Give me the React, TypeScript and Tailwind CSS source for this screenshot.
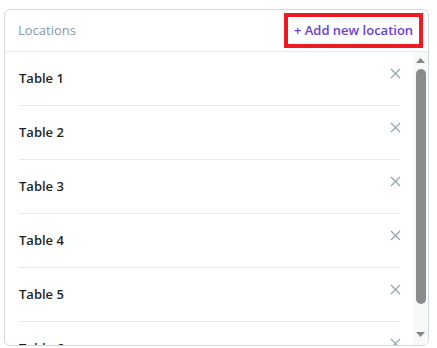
const tables = ['Table 1', 'Table 2', 'Table 3', 'Table 4', 'Table 5', 'Table 6', 'Table 7', 'Table 8'];

const Cross = () => (
  <svg width="11" height="11" viewBox="0 0 11 11" className="-mt-[10px] -mr-[1px]">
    <path d="M1 1L10 10M10 1L1 10" stroke="#93a3b0" strokeWidth="1.2" fill="none" />
  </svg>
);

const Arrow = ({ down }: { down?: boolean }) => (
  <svg width="9" height="5" viewBox="0 0 9 5">
    <path d={down ? 'M0 0H9L4.5 5Z' : 'M0 5H9L4.5 0Z'} fill="#858585" />
  </svg>
);

export default function App() {
  return (
    <div className="w-[437px] h-[348px] bg-white pt-[9px] pl-[4px] font-['Open_Sans',sans-serif]">
      <div className="w-[425px] h-[337px] border border-[#d3d9de] rounded-[6px] flex flex-col overflow-hidden">
        <div className="h-[42px] flex items-center justify-between pl-[13px] pr-[5px] border-b border-[#e6e9ec] shrink-0">
          <span className="text-[13px] text-[#8797a6]">Locations</span>
          <button className="h-[35px] w-[139px] border-[4px] border-[#ec1c24] text-[13px] font-semibold text-[#6b3fd6] flex items-center justify-center">
            + Add new location
          </button>
        </div>
        <div className="flex-1 flex min-h-0">
          <div className="flex-1 overflow-hidden">
            {tables.map((t) => (
              <div key={t} className="ml-[14px] mr-[13px] h-[54px] border-b border-[#e6e9ec] flex items-center justify-between">
                <span className="text-[13px] font-semibold text-[#1f1f1f]">{t}</span>
                <Cross />
              </div>
            ))}
          </div>
          <div className="w-[15px] bg-[#f8f8f8] flex flex-col items-center">
            <div className="h-[15px] flex items-center justify-center pt-[1px]">
              <Arrow />
            </div>
            <div className="flex-1 w-full flex flex-col items-center pt-[2px]">
              <div className="w-[10px] h-[235px] rounded-full bg-[#8b8b8b] ml-[1px]" />
            </div>
            <div className="h-[17px] flex items-start justify-center pt-[4px]">
              <Arrow down />
            </div>
          </div>
        </div>
      </div>
    </div>
  );
}
